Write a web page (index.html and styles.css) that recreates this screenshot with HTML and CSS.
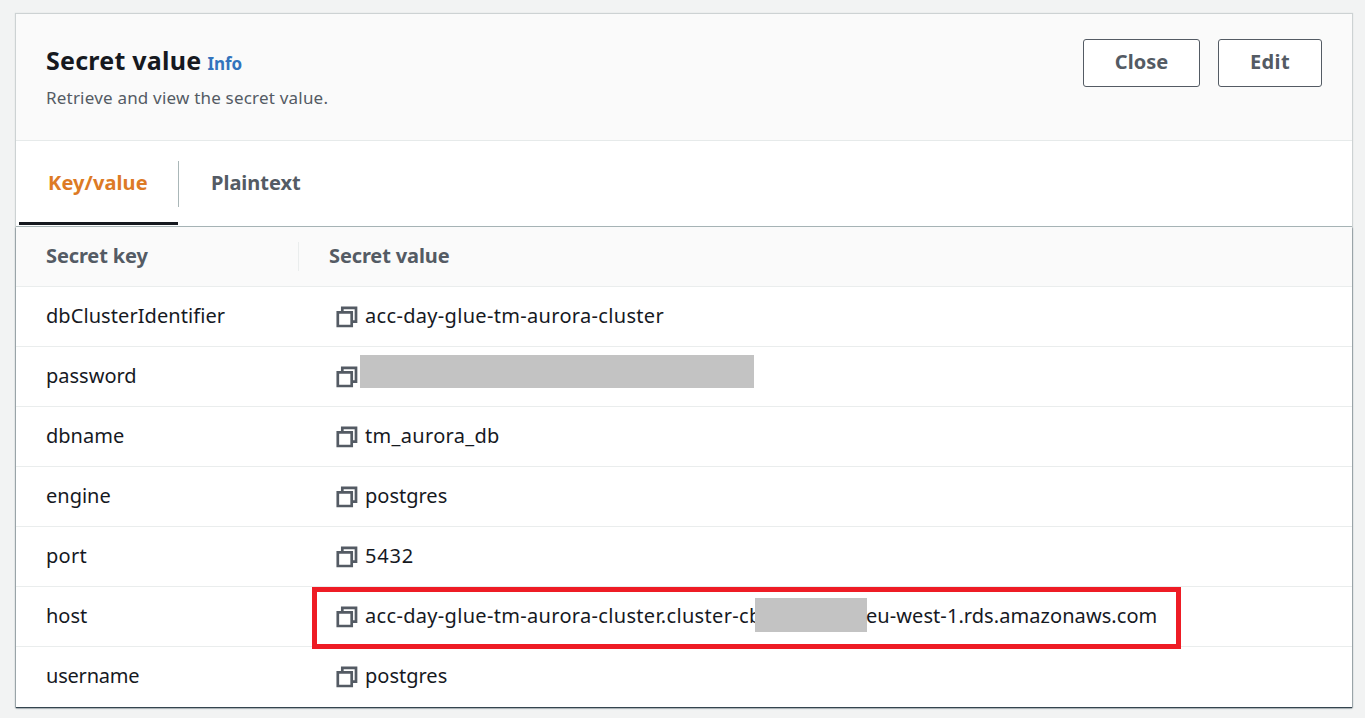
FILE: index.html
```html
<!DOCTYPE html>
<html lang="en">
<head>
<meta charset="utf-8">
<title>Secret value</title>
<link rel="stylesheet" href="styles.css">
</head>
<body>
<svg class="sprite" aria-hidden="true">
  <symbol id="copy" viewBox="0 0 22 22">
    <path d="M6.300 5.500V1.800H20V15.700H16.500" fill="none" stroke="#545b64" stroke-width="2.700"/>
    <path d="M1.800 6.300H15.700V20H1.800Z" fill="none" stroke="#545b64" stroke-width="2.700"/>
  </symbol>
</svg>
<main class="card">
  <header class="header">
    <div class="heading">
      <div class="title-line"><h1 class="title">Secret value</h1><a class="info">Info</a></div>
      <p class="description">Retrieve and view the secret value.</p>
    </div>
    <div class="actions">
      <button class="button close">Close</button>
      <button class="button edit">Edit</button>
    </div>
  </header>
  <nav class="tabs">
    <div class="tab active"><span class="tab-label">Key/value</span></div>
    <div class="tab"><span class="tab-label">Plaintext</span></div>
  </nav>
  <section class="table">
    <div class="row head"><div class="key"><span>Secret key</span></div><div class="value"><span>Secret value</span></div></div>
    <div class="row"><div class="key"><span class="k-cluster">dbClusterIdentifier</span></div><div class="value"><svg class="icon"><use href="#copy"/></svg><span class="v-cluster">acc-day-glue-tm-aurora-cluster</span></div></div>
    <div class="row"><div class="key"><span>password</span></div><div class="value"><svg class="icon"><use href="#copy"/></svg><span class="mask password-mask"></span></div></div>
    <div class="row"><div class="key"><span>dbname</span></div><div class="value"><svg class="icon"><use href="#copy"/></svg><span class="v-db">tm_aurora_db</span></div></div>
    <div class="row"><div class="key"><span>engine</span></div><div class="value"><svg class="icon"><use href="#copy"/></svg><span>postgres</span></div></div>
    <div class="row"><div class="key"><span class="k-port">port</span></div><div class="value"><svg class="icon"><use href="#copy"/></svg><span class="v-port">5432</span></div></div>
    <div class="row"><div class="key"><span>host</span></div><div class="value host"><svg class="icon"><use href="#copy"/></svg><span class="host-start">acc-day-glue-tm-aurora-cluster.cluster-cb</span><span class="mask host-mask"></span><span class="host-end">eu-west-1.rds.amazonaws.com</span><span class="highlight"></span></div></div>
    <div class="row"><div class="key"><span class="k-user">username</span></div><div class="value"><svg class="icon"><use href="#copy"/></svg><span>postgres</span></div></div>
  </section>
</main>
</body>
</html>
```
FILE: styles.css
```css
* { box-sizing: border-box; }
body {
  margin: 0;
  height: 718px;
  padding: 14px 13px 0 16px;
  background: #f2f3f3;
  color: #16191f;
  font: 20px/28px "Noto Sans", sans-serif;
  overflow: hidden;
}
.sprite { display: none; }
.card {
  height: 693px;
  background: #fff;
  box-shadow: 0 0 1px 1px #cdd2d3;
}
.header {
  height: 127px;
  padding: 25px 30px 0;
  display: flex;
  justify-content: space-between;
  background: #fafafa;
  border-bottom: 1px solid #e6eaea;
}
.heading { padding-top: 3px; }
.title-line { display: flex; align-items: baseline; gap: 6px; height: 36px; }
.title { margin: 0; font-size: 25px; line-height: 36px; font-weight: 700; letter-spacing: 0.25px; }
.info { font-size: 17px; line-height: 24px; font-weight: 700; color: #3273bd; letter-spacing: -0.1px; }
.description { margin: 7px 0 0; font-size: 17px; line-height: 26px; color: #545b64; letter-spacing: 0.2px; }
.actions { display: flex; gap: 18px; }
.button {
  height: 48px;
  padding: 0 0 3px;
  background: #fff;
  border: 1px solid #545b64;
  border-radius: 3px;
  color: #545b64;
  font: 700 20px/28px "Noto Sans", sans-serif;
}
.close { width: 117px; }
.edit { width: 104px; letter-spacing: 0.4px; }
.tabs {
  display: flex;
  height: 86px;
  padding-left: 3px;
  border-bottom: 1px solid #aab7b8;
  color: #545b64;
  font-weight: 700;
}
.tab { width: 159px; height: 84px; padding: 28px 0 0 29px; }
.tab + .tab { margin-top: 20px; height: 46px; padding: 8px 0 0 32px; border-left: 1px solid #aab7b8; }
.active { color: #dd7a25; border-bottom: 3px solid #16191f; letter-spacing: 0.1px; }
.table { box-shadow: 0 1px 1px #34444f, 0 1px 2px #73838a; }
.row { display: flex; height: 60px; background: #fff; border-bottom: 1px solid #eaeded; }
.row:last-child { border-bottom: 0; }
.row.head { background: #fafafa; color: #545b64; font-weight: 700; letter-spacing: -0.12px; }
.key { width: 283px; padding: 15px 0 0 30px; }
.head .key { height: 29px; margin-top: 15px; padding-top: 0; border-right: 1px solid #eaeded; }
.value { display: flex; padding: 15px 0 0 37px; white-space: nowrap; }
.head .value { padding-left: 30px; }
.icon { width: 22px; height: 22px; margin: 4px 7px 0 0; flex: none; }
.k-cluster { letter-spacing: 0.07px; }
.k-port { letter-spacing: 0.25px; }
.k-user { letter-spacing: -0.2px; }
.v-cluster, .v-db { letter-spacing: 0.32px; }
.v-port { letter-spacing: 0.8px; }
.mask { background: #c3c3c3; flex: none; }
.password-mask { width: 394px; height: 33px; margin: -7px 0 0 -5px; }
.host { position: relative; }
.host-start { width: 390px; overflow: hidden; letter-spacing: 0.32px; }
.host-mask { width: 112px; height: 34px; margin-top: -4px; }
.host-end { margin-left: -1px; letter-spacing: 0.07px; }
.highlight { position: absolute; left: 13px; top: 0; width: 869px; height: 62px; border: 5px solid #ee1c25; z-index: 1; }
```
